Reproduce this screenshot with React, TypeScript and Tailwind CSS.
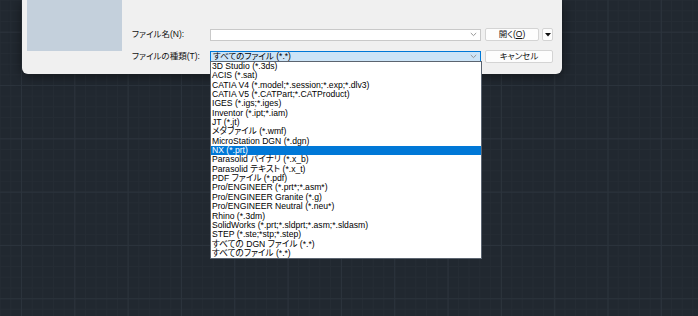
import React from "react";

const items = [
  "3D Studio (*.3ds)",
  "ACIS (*.sat)",
  "CATIA V4 (*.model;*.session;*.exp;*.dlv3)",
  "CATIA V5 (*.CATPart;*.CATProduct)",
  "IGES (*.igs;*.iges)",
  "Inventor (*.ipt;*.iam)",
  "JT (*.jt)",
  "メタファイル (*.wmf)",
  "MicroStation DGN (*.dgn)",
  "NX (*.prt)",
  "Parasolid バイナリ (*.x_b)",
  "Parasolid テキスト (*.x_t)",
  "PDF ファイル (*.pdf)",
  "Pro/ENGINEER (*.prt*;*.asm*)",
  "Pro/ENGINEER Granite (*.g)",
  "Pro/ENGINEER Neutral (*.neu*)",
  "Rhino (*.3dm)",
  "SolidWorks (*.prt;*.sldprt;*.asm;*.sldasm)",
  "STEP (*.ste;*stp;*.step)",
  "すべての DGN ファイル (*.*)",
  "すべてのファイル (*.*)",
];

function Chevron() {
  return (
    <svg width="7" height="5" viewBox="0 0 7 5" className="shrink-0">
      <polyline points="0.8,1 3.5,3.6 6.2,1" fill="none" stroke="#8a8a8a" strokeWidth="0.9" />
    </svg>
  );
}

export default function App() {
  return (
    <div className="relative w-[698px] h-[316px] overflow-hidden bg-[#212830] bg-[image:linear-gradient(to_right,#2b333c_1px,transparent_1px),linear-gradient(to_bottom,#2b333c_1px,transparent_1px),linear-gradient(to_right,#252c34_1px,transparent_1px),linear-gradient(to_bottom,#252c34_1px,transparent_1px)] bg-[size:53.33px_53.33px,53.33px_53.33px,10.667px_10.667px,10.667px_10.667px] bg-[position:21px_31.7px] font-['Liberation_Sans','Noto_Sans_CJK_JP',sans-serif] [font-feature-settings:'palt'] text-black">
      <div className="ml-[22px] w-[540px] h-[74px] bg-[#f0f0f0] rounded-b-[6px] shadow-[0_2px_12px_rgba(0,0,0,0.5)] flex">
        <div className="ml-[5px] w-[95px] h-[51px] bg-[#c4d0dc]" />
        <div className="ml-[10px] pt-[28px] flex flex-col gap-[9px]">
          <div className="flex items-center h-[13px]">
            <span className="w-[78px] text-[8.5px] leading-none text-[#111]">ファイル名(N):</span>
            <div className="w-[271px] h-[12px] bg-white border border-[#c9c9c9] flex items-center justify-end pr-[3px]">
              <Chevron />
            </div>
            <button className="ml-[4px] w-[54px] h-[13px] bg-[#fdfdfd] border border-[#d4d4d4] rounded-[2px] text-[8.5px] leading-none flex items-center justify-center text-[#111]">
              開く(<span className="underline">O</span>)
            </button>
            <button className="ml-[3px] w-[11px] h-[13px] bg-[#fdfdfd] border border-[#d4d4d4] rounded-[2px] flex items-center justify-center">
              <svg width="6" height="4" viewBox="0 0 6 4">
                <polygon points="0,0 6,0 3,3.5" fill="#111" />
              </svg>
            </button>
          </div>
          <div className="flex items-center h-[13px]">
            <span className="w-[78px] text-[8.5px] leading-none text-[#111]">ファイルの種類(T):</span>
            <div className="w-[271px] h-[12px] bg-[#cce4f7] border border-[#0078d7] flex items-center pl-[2px] pr-[3px]">
              <span className="flex-1 text-[8.5px] leading-none">すべてのファイル (*.*)</span>
              <Chevron />
            </div>
            <button className="ml-[4px] w-[68px] h-[13px] bg-[#fdfdfd] border border-[#d4d4d4] rounded-[2px] text-[8.5px] leading-none flex items-center justify-center text-[#111]">
              キャンセル
            </button>
          </div>
        </div>
      </div>
      <div className="absolute left-[210px] top-[61px] w-[272px] bg-white border border-[#5b6470] flex flex-col">
        {items.map((it) => (
          <div
            key={it}
            className={
              it === "NX (*.prt)"
                ? "h-[9.35px] leading-[9.35px] text-[8.6px] pl-[1px] whitespace-nowrap bg-[#0078d7] text-white"
                : "h-[9.35px] leading-[9.35px] text-[8.6px] pl-[1px] whitespace-nowrap text-black"
            }
          >
            {it}
          </div>
        ))}
      </div>
    </div>
  );
}
